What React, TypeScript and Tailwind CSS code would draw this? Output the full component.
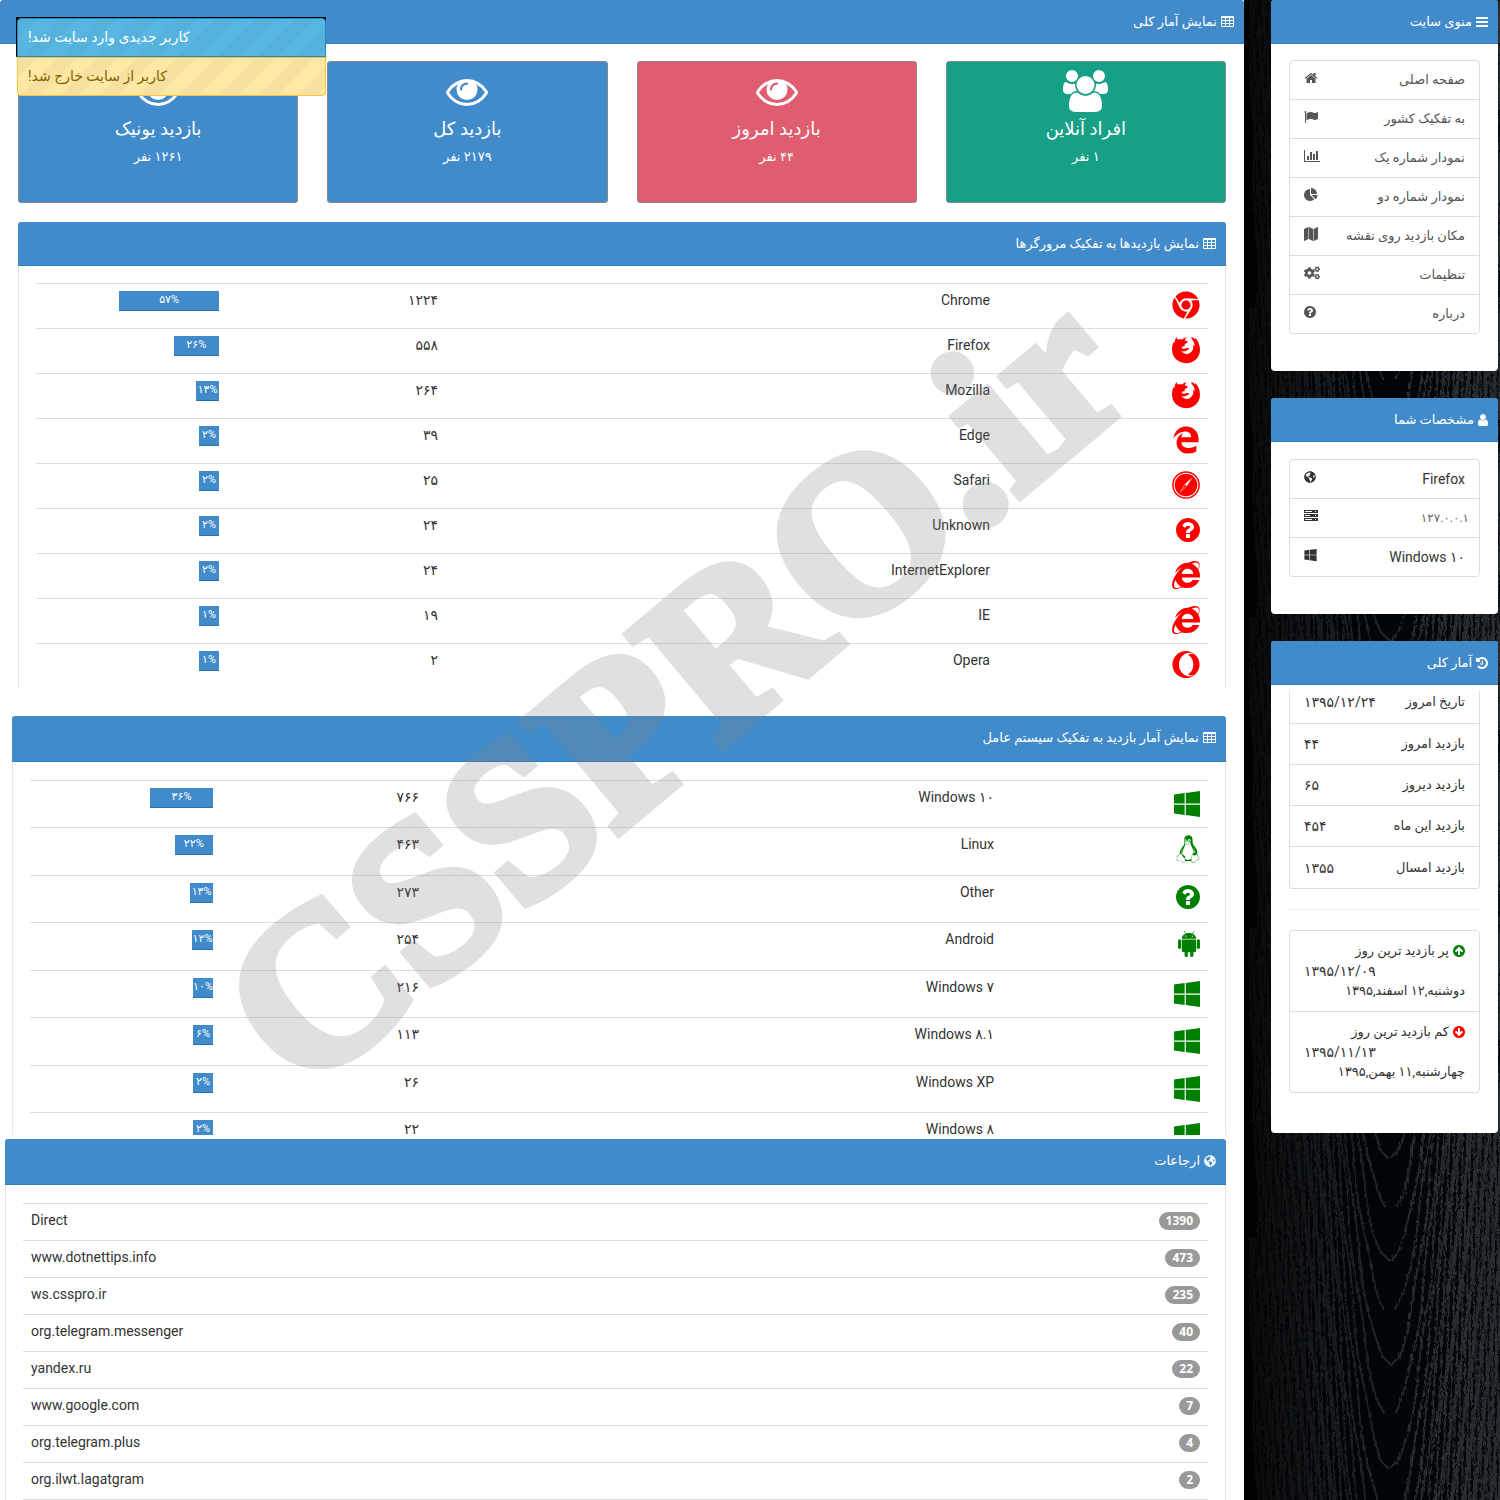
import type { ReactNode } from "react";
import {
  FaChrome,
  FaCogs,
  FaEdgeLegacy,
  FaGlobeAmericas,
  FaInternetExplorer,
  FaLinux,
  FaOpera,
  FaWindows,
} from "react-icons/fa";

/* ---------- icons ---------- */

function Glyph({ box, d, className }: { box: string; d: string; className: string }) {
  return (
    <svg viewBox={box} className={className} fill="currentColor" aria-hidden="true">
      <path d={d} />
    </svg>
  );
}

const DISC =
  "q0 209-103 385.5t-279.5 279.5-385.5 103-385.5-103-279.5-279.5-103-385.5 103-385.5 279.5-279.5 385.5-103 385.5 103 279.5 279.5 103 385.5z";

const HOME =
  "M1472 992v480q0 26-19 45t-45 19h-384v-384h-256v384h-384q-26 0-45-19t-19-45v-480q0-1 .5-3t.5-3l575-474 575 474q1 2 1 6zm223-69l-62 74q-8 9-21 11h-3q-13 0-21-7l-692-577-692 577q-12 8-24 7-13-2-21-11l-62-74q-8-10-7-23.5t11-21.5l719-599q32-26 76-26t76 26l244 204v-195q0-14 9-23t23-9h192q14 0 23 9t9 23v408l219 182q10 8 11 21.5t-7 23.5z";
const FLAG =
  "M320 256q0 72-64 110v1266q0 13-9.5 22.5t-22.5 9.5h-64q-13 0-22.5-9.5t-9.5-22.5v-1266q-64-38-64-110 0-53 37.5-90.5t90.5-37.5 90.5 37.5 37.5 90.5zm1472 64v763q0 25-12.5 38.5t-39.5 27.5q-215 116-369 116-61 0-123.5-22t-108.5-48-115.5-48-142.5-22q-192 0-464 146-17 9-33 9-26 0-45-19t-19-45v-742q0-32 31-55 21-14 79-43 236-120 421-120 107 0 200 29t219 88q38 19 88 19 54 0 117.5-21t110-47 88-47 54.5-21q26 0 45 19t19 45z";
const BARS_CHART =
  "M640 896v512h-256v-512h256zm384-512v1024h-256v-1024h256zm1024 1152v128h-2048v-1536h128v1408h1920zm-640-896v768h-256v-768h256zm384-384v1152h-256v-1152h256z";
const PIE =
  "M768 890l546 546q-106 108-247.5 168t-298.5 60q-209 0-385.5-103t-279.5-279.5-103-385.5 103-385.5 279.5-279.5 385.5-103v762zm187 6h773q0 157-60 298.5t-168 247.5zm709-128h-768v-768q209 0 385.5 103t279.5 279.5 103 385.5z";
const MAP =
  "M512 0q13 0 22.5 9.5t9.5 22.5v1472q0 20-17 28l-480 256q-7 4-15 4-13 0-22.5-9.5t-9.5-22.5v-1472q0-20 17-28l480-256q7-4 15-4zm1248 0q13 0 22.5 9.5t9.5 22.5v1472q0 20-17 28l-480 256q-7 4-15 4-13 0-22.5-9.5t-9.5-22.5v-1472q0-20 17-28l480-256q7-4 15-4zm-1120 0q8 0 14 3l512 256q18 10 18 29v1472q0 13-9.5 22.5t-22.5 9.5q-8 0-14-3l-512-256q-18-10-18-29v-1472q0-13 9.5-22.5t22.5-9.5z";
const QUESTION =
  "M1024 1376v-192q0-14-9-23t-23-9h-192q-14 0-23 9t-9 23v192q0 14 9 23t23 9h192q14 0 23-9t9-23zm256-672q0-88-55.5-163t-138.5-116-170-41q-243 0-371 213-15 24 8 42l132 100q7 6 19 6 16 0 25-12 53-68 86-92 34-24 86-24 48 0 85.5 26t37.5 59q0 38-20 61t-68 45q-63 28-115.5 86.5t-52.5 125.5v36q0 14 9 23t23 9h192q14 0 23-9t9-23q0-19 21.5-49.5t54.5-49.5q32-18 49-28.5t46-35 44.5-48 28-60.5 12.5-81zm384 192" +
  DISC;
const ARROW =
  "M1412 895q0-27-18-45l-362-362-91-91q-18-18-45-18t-45 18l-91 91-362 362q-18 18-18 45t18 45l91 91q18 18 45 18t45-18l189-189v502q0 26 19 45t45 19h128q26 0 45-19t19-45v-502l189 189q19 19 45 19t45-19l91-91q18-18 18-45zm252 1" +
  DISC;
const MENU =
  "M1664 1344v128q0 26-19 45t-45 19h-1408q-26 0-45-19t-19-45v-128q0-26 19-45t45-19h1408q26 0 45 19t19 45zm0-512v128q0 26-19 45t-45 19h-1408q-26 0-45-19t-19-45v-128q0-26 19-45t45-19h1408q26 0 45 19t19 45zm0-512v128q0 26-19 45t-45 19h-1408q-26 0-45-19t-19-45v-128q0-26 19-45t45-19h1408q26 0 45 19t19 45z";
const USER =
  "M1536 1399q0 109-62.5 187t-150.5 78h-854q-88 0-150.5-78t-62.5-187q0-85 8.5-160.5t31.5-152 58.5-131 94-89 134.5-34.5q131 128 313 128t313-128q76 0 134.5 34.5t94 89 58.5 131 31.5 152 8.5 160.5zm-256-887q0 159-112.5 271.5t-271.5 112.5-271.5-112.5-112.5-271.5 112.5-271.5 271.5-112.5 271.5 112.5 112.5 271.5z";
const HISTORY =
  "M1664 896q0 156-61 298t-164 245-245 164-298 61q-172 0-327-72.5t-264-204.5q-7-10-6.5-22.5t8.5-20.5l137-138q10-9 25-9 16 2 23 12 73 95 179 147t225 52q104 0 198.5-40.5t163.5-109.5 109.5-163.5 40.5-198.5-40.5-198.5-109.5-163.5-163.5-109.5-198.5-40.5q-98 0-188 35.5t-160 101.5l137 138q31 30 14 69-17 40-59 40h-448q-26 0-45-19t-19-45v-448q0-42 40-59 39-17 69 14l130 129q107-101 244.5-156.5t284.5-55.5q156 0 298 61t245 164 164 245 61 298zm-640-288v448q0 14-9 23t-23 9h-320q-14 0-23-9t-9-23v-64q0-14 9-23t23-9h224v-352q0-14 9-23t23-9h64q14 0 23 9t9 23z";
const EYE =
  "M1664 960q-152-236-381-353 61 104 61 225 0 185-131.5 316.5t-316.5 131.5-316.5-131.5-131.5-316.5q0-121 61-225-229 117-381 353 133 205 333.5 326.5t434.5 121.5 434.5-121.5 333.5-326.5zm-720-384q0-20-14-34t-34-14q-125 0-214.5 89.5t-89.5 214.5q0 20 14 34t34 14 34-14 14-34q0-86 61-147t147-61q20 0 34-14t14-34zm848 384q0 34-20 69-140 230-376.5 368.5t-499.5 138.5-499.5-139-376.5-368q-20-35-20-69t20-69q140-229 376.5-368t499.5-139 499.5 139 376.5 368q20 35 20 69z";
const USERS =
  "M593 896q-162 5-265 128h-134q-82 0-138-40.5t-56-118.5q0-353 124-353 6 0 43.5 21t97.5 42.5 119 21.5q67 0 133-23-5 37-5 66 0 139 81 256zm1071 637q0 120-73 189.5t-194 69.5h-874q-121 0-194-69.5t-73-189.5q0-53 3.5-103.5t14-109 26.5-108.5 43-97.5 62-81 85.5-53.5 111.5-20q10 0 43 21.5t73 48 107 48 135 21.5 135-21.5 107-48 73-48 43-21.5q61 0 111.5 20t85.5 53.5 62 81 43 97.5 26.5 108.5 14 109 3.5 103.5zm-1024-1277q0 106-75 181t-181 75-181-75-75-181 75-181 181-75 181 75 75 181zm704 384q0 159-112.5 271.5t-271.5 112.5-271.5-112.5-112.5-271.5 112.5-271.5 271.5-112.5 271.5 112.5 112.5 271.5zm576 225q0 78-56 118.5t-138 40.5h-134q-103-123-265-128 81-117 81-256 0-29-5-66 66 23 133 23 59 0 119-21.5t97.5-42.5 43.5-21q124 0 124 353zm-128-609q0 106-75 181t-181 75-181-75-75-181 75-181 181-75 181 75 75 181z";
const FIREFOX =
  "M4.6.8C4.6 2 5 3 5.8 3.6 7.2 3 9 3.1 10.2 3.6 11.4 2.2 12.8 1.4 14.6 1.2 13.6 2.2 13 3.2 13 4.4 13.8 5 15 4.9 15.8 5.2 15.8 6.4 14.6 7.4 13 8 12.4 9 12.5 9.6 12.8 10.4 11.4 10 10.2 10.4 9.6 11.4 10.4 12.8 12.2 13 14 12.3 15.6 11.7 17.2 12.2 17.4 13.2 16 13.2 15.4 14.5 13.6 15.1 12 15.6 10.4 15.4 9.2 14.8 11 17.8 15 18.8 18 17 21 15 22 12 21 8.6 21.7 9 22.3 9.6 22.8 10.4 22.8 7.6 21.6 4.8 19.6 3 19.4 2.2 19.4 1.4 19.8.8 21 1.4 22 2.4 22.8 3.4 23 2.8 23 2.4 23 1.8 26.2 4.8 28 9 28 14 28 21.6 21.8 27.2 14 27.2 6.2 27.2 0 21.4 0 13.6 0 10.6.6 8 1.8 5.8 2 6.6 2.2 7.2 2.4 7.6 2.6 5 3.2 2.6 4.6.8z";

const GridIcon = () => (
  <svg viewBox="0 0 13 12" className="h-3 w-[13px]" fill="currentColor" fillRule="evenodd" aria-hidden="true">
    <path d="M1 0h11a1 1 0 0 1 1 1v9a1 1 0 0 1-1 1H1a1 1 0 0 1-1-1V1a1 1 0 0 1 1-1zM1 2v2h3V2zM5 2v2h3V2zM9 2v2h3V2zM1 5v2h3V5zM5 5v2h3V5zM9 5v2h3V5zM1 8v2h3V8zM5 8v2h3V8zM9 8v2h3V8z" />
  </svg>
);

const ServerIcon = () => (
  <svg viewBox="0 0 14 12" className="h-3 w-3.5" fill="currentColor" fillRule="evenodd" aria-hidden="true">
    <path d="M0 0h14v3H0zM1 1v1h7V1zM11 1v1h1V1zM0 4h14v3H0zM1 5v1h5V5zM11 5v1h1V5zM0 8h14v3H0zM1 9v1h7V9zM11 9v1h1V9z" />
  </svg>
);

const FirefoxIcon = () => <Glyph box="0 0 28 28" d={FIREFOX} className="h-7 w-7" />;

const SafariIcon = () => (
  <svg viewBox="0 0 28 28" className="h-7 w-7" aria-hidden="true">
    <circle cx="14" cy="14" r="13.1" fill="none" stroke="currentColor" strokeWidth="1.5" />
    <circle cx="14" cy="14" r="11.3" fill="currentColor" />
    <path d="M20.2 6.6 15.2 14.8 7.8 21.4 12.8 13.2z" fill="#fff" />
    <path d="M13.1 13.6 14.8 14.6 9.2 20z" fill="currentColor" />
  </svg>
);

const AndroidIcon = () => (
  <svg viewBox="0 0 22 28" className="h-7 w-[22px]" fill="currentColor" aria-hidden="true">
    <path d="M6.2 1.2 7.6 3.9M15.8 1.2 14.4 3.9" stroke="currentColor" strokeWidth="0.7" />
    <path
      fillRule="evenodd"
      d="M3.8 8.8C3.9 5.4 7 3 11 3s7.100 2.400 7.200 5.800zM7.700 5.400a.7.7 0 1 0 0 1.400.7.7 0 0 0 0-1.400zM14.300 5.400a.7.7 0 1 0 0 1.400.7.7 0 0 0 0-1.400z"
    />
    <path d="M3.800 9.600h14.400v11a1.600 1.600 0 0 1-1.600 1.600h-1.200v3.300a1.600 1.600 0 0 1-3.200 0v-3.300h-2.400v3.300a1.600 1.600 0 0 1-3.200 0v-3.300H5.400a1.600 1.600 0 0 1-1.600-1.600z" />
    <rect x="0" y="9.300" width="3.100" height="9.600" rx="1.550" />
    <rect x="18.900" y="9.300" width="3.100" height="9.600" rx="1.550" />
  </svg>
);

const Question = () => <Glyph box="128 0 1536 1792" d={QUESTION} className="h-7 w-6" />;
const Win = () => <FaWindows className="mt-px h-[30px] w-[26px]" />;

/* ---------- wood backdrop ---------- */

function grain(apex: number, side: number) {
  const points: string[] = [];
  for (let y = 0; y <= 320; y += 8) {
    if (apex - y < 0) break;
    const x = 146 + side * 2.9 * Math.sqrt(apex - y) + Math.sin(y / 21 + apex) * 1.2;
    points.push(`${x.toFixed(1)} ${y}`);
  }
  return "M" + points.join("L");
}

const GRAIN = Array.from({ length: 46 }, (_, i) => 24 + i * 52);

function Wood() {
  return (
    <svg className="absolute inset-y-0 right-0 h-full w-64" aria-hidden="true">
      <defs>
        <filter id="rough" x="0" y="0" width="100%" height="100%">
          <feTurbulence type="fractalNoise" baseFrequency="0.5 0.2" numOctaves="2" seed="4" result="n" />
          <feDisplacementMap in="SourceGraphic" in2="n" scale="5" />
        </filter>
        <pattern id="wood" width="256" height="310" y="-3" patternUnits="userSpaceOnUse">
          <rect width="256" height="310" fill="#02060a" />
          <g filter="url(#rough)" fill="none" stroke="#292d31" strokeWidth="2">
            {GRAIN.map((apex) => (
              <g key={apex}>
                <path d={grain(apex, -1)} />
                <path d={grain(apex, 1)} />
              </g>
            ))}
          </g>
        </pattern>
        <linearGradient id="shade">
          <stop offset="0" stopColor="#000" stopOpacity="0.8" />
          <stop offset="0.4" stopColor="#000" stopOpacity="0.3" />
          <stop offset="0.7" stopColor="#000" stopOpacity="0" />
        </linearGradient>
      </defs>
      <rect width="100%" height="100%" fill="url(#wood)" />
      <rect width="100%" height="100%" fill="url(#shade)" />
    </svg>
  );
}

/* ---------- shared pieces ---------- */

function Heading({ icon, children, tall }: { icon: ReactNode; children: ReactNode; tall?: boolean }) {
  return (
    <h2
      className={
        "flex items-center gap-1 rounded-t-[3px] border-b border-[#2f7cc4] bg-[#428bca] px-2.5 text-[13px] text-white " +
        (tall ? "h-[46px]" : "h-11")
      }
    >
      {icon}
      <span>{children}</span>
    </h2>
  );
}

function Panel({ title, icon, tall, children }: { title: string; icon: ReactNode; tall?: boolean; children: ReactNode }) {
  return (
    <>
      <Heading icon={icon} tall={tall}>
        {title}
      </Heading>
      <div className={"border-x border-[#e7e7ee] px-[17px] " + (tall ? "pt-[18px]" : "pt-[17px]")}>{children}</div>
    </>
  );
}

function SidePanel({ title, icon, children }: { title: string; icon: ReactNode; children: ReactNode }) {
  return (
    <section className="rounded bg-white">
      <Heading icon={icon}>{title}</Heading>
      {children}
    </section>
  );
}

const small = "h-3.5 w-3.5";

const MENU_ITEMS: [string, ReactNode][] = [
  ["صفحه اصلی", <Glyph box="0 0 1792 1792" d={HOME} className={small} />],
  ["به تفکیک کشور", <Glyph box="0 0 1792 1792" d={FLAG} className={small} />],
  ["نمودار شماره یک", <Glyph box="0 0 2048 1792" d={BARS_CHART} className="h-3.5 w-4" />],
  ["نمودار شماره دو", <Glyph box="0 0 1792 1792" d={PIE} className={small} />],
  ["مکان بازدید روی نقشه", <Glyph box="0 0 1792 1792" d={MAP} className={small} />],
  ["تنظیمات", <FaCogs className="h-3.5 w-4" />],
  ["درباره", <Glyph box="128 0 1536 1792" d={QUESTION} className="h-3.5 w-3" />],
];

const TOTALS = [
  ["تاریخ امروز", "۱۳۹۵/۱۲/۲۴"],
  ["بازدید امروز", "۴۴"],
  ["بازدید دیروز", "۶۵"],
  ["بازدید این ماه", "۴۵۴"],
  ["بازدید امسال", "۱۳۵۵"],
];

const CARDS = [
  { title: "افراد آنلاین", value: "۱ نفر", tone: "bg-[#16a085]", users: true },
  { title: "بازدید امروز", value: "۴۴ نفر", tone: "bg-[#e05d6f]" },
  { title: "بازدید کل", value: "۲۱۷۹ نفر", tone: "bg-[#428bca]" },
  { title: "بازدید یونیک", value: "۱۲۶۱ نفر", tone: "bg-[#428bca]" },
];

type Row = { icon: ReactNode; name: string; count: string; pct: number; label: string };

const BROWSERS: Row[] = [
  { icon: <FaChrome className="h-7 w-7" />, name: "Chrome", count: "۱۲۲۴", pct: 57, label: "۵۷%" },
  { icon: <FirefoxIcon />, name: "Firefox", count: "۵۵۸", pct: 26, label: "۲۶%" },
  { icon: <FirefoxIcon />, name: "Mozilla", count: "۲۶۴", pct: 13, label: "۱۳%" },
  { icon: <FaEdgeLegacy className="h-7 w-7" />, name: "Edge", count: "۳۹", pct: 2, label: "۲%" },
  { icon: <SafariIcon />, name: "Safari", count: "۲۵", pct: 2, label: "۲%" },
  { icon: <Question />, name: "Unknown", count: "۲۴", pct: 2, label: "۲%" },
  { icon: <FaInternetExplorer className="h-7 w-7" />, name: "InternetExplorer", count: "۲۴", pct: 2, label: "۲%" },
  { icon: <FaInternetExplorer className="h-7 w-7" />, name: "IE", count: "۱۹", pct: 1, label: "۱%" },
  { icon: <FaOpera className="h-7 w-7" />, name: "Opera", count: "۲", pct: 1, label: "۱%" },
];

const SYSTEMS: Row[] = [
  { icon: <Win />, name: "Windows ۱۰", count: "۷۶۶", pct: 36, label: "۳۶%" },
  { icon: <FaLinux className="h-7 w-6" />, name: "Linux", count: "۴۶۳", pct: 22, label: "۲۲%" },
  { icon: <Question />, name: "Other", count: "۲۷۳", pct: 13, label: "۱۳%" },
  { icon: <AndroidIcon />, name: "Android", count: "۲۵۴", pct: 12, label: "۱۲%" },
  { icon: <Win />, name: "Windows ۷", count: "۲۱۶", pct: 10, label: "۱۰%" },
  { icon: <Win />, name: "Windows ۸.۱", count: "۱۱۳", pct: 6, label: "۶%" },
  { icon: <Win />, name: "Windows XP", count: "۲۶", pct: 2, label: "۲%" },
  { icon: <Win />, name: "Windows ۸", count: "۲۲", pct: 2, label: "۲%" },
];

const REFERRERS = [
  ["Direct", "1390"],
  ["www.dotnettips.info", "473"],
  ["ws.csspro.ir", "235"],
  ["org.telegram.messenger", "40"],
  ["yandex.ru", "22"],
  ["www.google.com", "7"],
  ["org.telegram.plus", "4"],
  ["org.ilwt.lagatgram", "2"],
];

function StatTable({ rows, label, roomy }: { rows: Row[]; label: string; roomy?: boolean }) {
  return (
    <table aria-label={label} className="w-full table-fixed text-sm leading-[18px] text-[#333]">
      <colgroup>
        <col className={roomy ? "w-[206px]" : "w-[210px]"} />
        <col />
        <col className={roomy ? "w-[206px]" : "w-[219px]"} />
        <col className="w-[191px]" />
      </colgroup>
      <tbody>
        {rows.map((r) => (
          <tr
            key={r.name}
            className={"border-t border-[#ddd] align-top " + (roomy ? "odd:h-[47px] even:h-12" : "h-[45px]")}
          >
            <td className={"px-2 pt-[7px] " + (roomy ? "text-[#008000]" : "text-[#f00]")}>{r.icon}</td>
            <td className="px-2 pt-[7px]">{r.name}</td>
            <td className="px-2 pt-[7px]">{r.count}</td>
            <td className="px-2 pt-[7px]">
              <div
                dir="ltr"
                className="ml-auto h-5 min-w-5 border-b border-[#2a6fae] bg-[#428bca] text-center text-[11px] leading-[18px] text-white"
                style={{ width: `${r.pct}%` }}
              >
                {r.label}
              </div>
            </td>
          </tr>
        ))}
      </tbody>
    </table>
  );
}

/* ---------- page ---------- */

export default function App() {
  return (
    <div
      dir="rtl"
      lang="fa"
      className="relative grid min-h-screen grid-cols-[227px_minmax(0,1fr)] gap-[27px] overflow-hidden bg-[#02060a] pr-0.5 font-[Roboto,'DejaVu_Sans',sans-serif] text-[13px]"
    >
      <Wood />

      <aside className="relative flex flex-col gap-[27px]">
        <SidePanel title="منوی سایت" icon={<Glyph box="128 0 1536 1792" d={MENU} className="h-3.5 w-3" />}>
          <nav className="px-[18px] pt-4 pb-[37px]">
            <ul className="divide-y divide-[#ddd] rounded border border-[#ddd]">
              {MENU_ITEMS.map(([text, icon]) => (
                <li key={text}>
                  <a href="#" className="flex h-[38px] items-center justify-between px-3.5 text-[#555]">
                    <span>{text}</span>
                    <span className="mb-1">{icon}</span>
                  </a>
                </li>
              ))}
            </ul>
          </nav>
        </SidePanel>

        <SidePanel title="مشخصات شما" icon={<Glyph box="256 0 1280 1792" d={USER} className="h-3.5 w-2.5" />}>
          <div className="px-[18px] pt-[17px] pb-[37px]">
            <ul className="divide-y divide-[#ddd] rounded border border-[#ddd] text-[#333]">
              <li className="flex h-[39px] items-center justify-between px-3.5">
                <span className="text-sm">Firefox</span>
                <FaGlobeAmericas className="mb-1 h-3 w-3" />
              </li>
              <li className="flex h-[39px] items-center justify-between pr-2.5 pl-3.5">
                <span className="text-xs text-[#666]">۱۲۷.۰.۰.۱</span>
                <span className="mb-1">
                  <ServerIcon />
                </span>
              </li>
              <li className="flex h-[38px] items-center justify-between px-3.5">
                <span className="text-sm">Windows ۱۰</span>
                <FaWindows className="mb-1 h-3.5 w-[13px]" />
              </li>
            </ul>
          </div>
        </SidePanel>

        <SidePanel title="آمار کلی" icon={<Glyph box="128 0 1536 1792" d={HISTORY} className="h-3.5 w-3" />}>
          <div className="px-[18px] pt-1.5 pb-10 text-[#333]">
            <dl className="divide-y divide-[#ddd] rounded-b border border-t-0 border-[#ddd]">
              {TOTALS.map(([k, v]) => (
                <div key={k} className="flex h-[41px] items-center justify-between px-3.5 first:h-[33px] first:pb-2.5">
                  <dt>{k}</dt>
                  <dd className="text-sm">{v}</dd>
                </div>
              ))}
            </dl>
            <hr className="my-5 border-[#eee]" />
            <ul className="divide-y divide-[#ddd] rounded border border-[#ddd] leading-5">
              <li className="h-[81px] px-3.5 pt-2.5">
                <p className="flex items-center gap-1">
                  <Glyph box="128 0 1536 1792" d={ARROW} className="h-3.5 w-3 text-[#008000]" />
                  پر بازدید ترین روز
                </p>
                <p className="text-left text-sm">۱۳۹۵/۱۲/۰۹</p>
                <p>دوشنبه,۱۲ اسفند,۱۳۹۵</p>
              </li>
              <li className="h-20 px-3.5 pt-2.5">
                <p className="flex items-center gap-1">
                  <Glyph box="128 0 1536 1792" d={ARROW} className="h-3.5 w-3 rotate-180 text-[#f00]" />
                  کم بازدید ترین روز
                </p>
                <p className="text-left text-sm">۱۳۹۵/۱۱/۱۳</p>
                <p>چهارشنبه,۱۱ بهمن,۱۳۹۵</p>
              </li>
            </ul>
          </div>
        </SidePanel>
      </aside>

      <main className="relative bg-white">
        <Heading icon={<GridIcon />}>نمایش آمار کلی</Heading>

        <div className="grid grid-cols-4 gap-[29px] px-[18px] pt-[17px]">
          {CARDS.map((c) => (
            <div
              key={c.title}
              className={"flex h-[142px] flex-col items-center rounded-[3px] border border-[#888] pt-2 text-white " + c.tone}
            >
              {c.users ? (
                <Glyph box="0 0 1920 1792" d={USERS} className="h-[42px] w-[45px]" />
              ) : (
                <Glyph box="0 0 1792 1792" d={EYE} className="h-[42px] w-[42px]" />
              )}
              <h3 className="mt-[3px] text-lg leading-7">{c.title}</h3>
              <p className="text-[13px] leading-7">{c.value}</p>
            </div>
          ))}
        </div>

        <section className="mx-[18px] mt-[19px]">
          <Panel title="نمایش بازدیدها به تفکیک مرورگرها" icon={<GridIcon />}>
            <StatTable rows={BROWSERS} label="مرورگرها" />
          </Panel>
        </section>

        <section className="mt-[27px] mr-[18px] ml-3 h-[419px] overflow-hidden">
          <Panel title="نمایش آمار بازدید به تفکیک سیستم عامل" icon={<GridIcon />} tall>
            <StatTable rows={SYSTEMS} label="سیستم عامل" roomy />
          </Panel>
        </section>

        <section className="mt-1 mr-[18px] ml-[5px]">
          <Panel title="ارجاعات" icon={<FaGlobeAmericas className="h-3 w-3" />} tall>
            <table aria-label="ارجاعات" className="w-full text-sm leading-[18px] text-[#333]">
              <tbody>
                {REFERRERS.map(([host, hits]) => (
                  <tr key={host} className="h-[37px] border-t border-[#ddd] align-top last:border-b">
                    <td className="px-2 pt-2">
                      <span className="block w-fit rounded-full bg-[#999] px-[7px] font-['Open_Sans',sans-serif] text-xs leading-[18px] font-bold text-white">
                        {hits}
                      </span>
                    </td>
                    <td dir="ltr" className="px-2 pt-[7px] text-left">
                      {host}
                    </td>
                  </tr>
                ))}
              </tbody>
            </table>
          </Panel>
        </section>

        <div
          dir="ltr"
          aria-hidden="true"
          className="pointer-events-none absolute top-[689px] left-[673px] -translate-x-1/2 -translate-y-1/2 -rotate-40 font-['Liberation_Serif',serif] text-[222px] leading-none font-bold text-[#7f7f7f] opacity-24 [-webkit-text-stroke:10px_#7f7f7f]"
        >
          CSSPRO.ir
        </div>

        <div className="absolute top-[17px] left-4 w-[310px] border-t border-black">
          <div className="border-l border-black bg-black">
            <p
              role="status"
              className="h-[39px] rounded-t border border-[#1f8cbd] bg-[#57b7e2] bg-[repeating-linear-gradient(135deg,#00000008_0_14px,transparent_14px_28px)] px-2.5 text-left text-sm leading-9 text-white"
            >
              کاربر جدیدی وارد سایت شد!
            </p>
          </div>
          <p
            role="status"
            className="ml-px h-[39px] rounded-b border border-[#fbc23c] bg-[#ffe8a5] bg-[repeating-linear-gradient(135deg,#00000008_0_14px,transparent_14px_28px)] px-2.5 text-left text-sm leading-9 text-[#826200]"
          >
            کاربر از سایت خارج شد!
          </p>
        </div>
      </main>
    </div>
  );
}
